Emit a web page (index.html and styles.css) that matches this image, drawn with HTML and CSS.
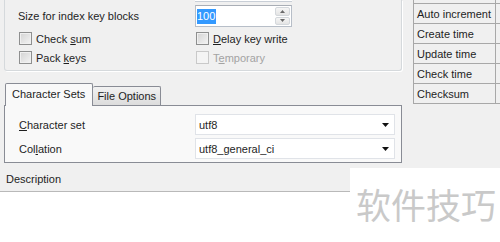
FILE: index.html
```html
<!DOCTYPE html>
<html>
<head>
	<title>Table Options</title>
	<link rel="stylesheet" href="styles.css">
</head>
<body>
	<div class="top">
		<div class="left">
			<div class="group">
				<div class="prev_input"></div>
				<div class="grid">
					<div class="label">Size for index key blocks</div>
					<div class="spin">
						<div class="spin_text"><span class="sel">100</span></div>
						<div class="spin_btns">
							<div class="spin_btn"><svg width="5" height="3" viewBox="0 0 5 3"><path d="M0 3 L2.5 0 L5 3 Z" fill="#6a6a6a"/></svg></div>
							<div class="spin_btn"><svg width="5" height="3" viewBox="0 0 5 3"><path d="M0 0 L2.5 3 L5 0 Z" fill="#6a6a6a"/></svg></div>
						</div>
					</div>
					<div class="check"><span class="box"></span><span>Check <u>s</u>um</span></div>
					<div class="check"><span class="box"></span><span><u>D</u>elay key write</span></div>
					<div class="check"><span class="box"></span><span>Pack <u>k</u>eys</span></div>
					<div class="check disabled"><span class="box"></span><span>T<u>e</u>mporary</span></div>
				</div>
			</div>

			<div class="tabs">
				<div class="tab active">Character Sets</div>
				<div class="tab">File Options</div>
			</div>
			<div class="panel">
				<div class="label"><span><u>C</u>haracter set</span></div>
				<div class="combo"><span>utf8</span><svg width="7" height="4" viewBox="0 0 7 4"><path d="M0 0 L7 0 L3.5 4 Z" fill="#111"/></svg></div>
				<div class="label"><span>Col<u>l</u>ation</span></div>
				<div class="combo"><span>utf8_general_ci</span><svg width="7" height="4" viewBox="0 0 7 4"><path d="M0 0 L7 0 L3.5 4 Z" fill="#111"/></svg></div>
			</div>
		</div>

		<table class="info">
			<tr><td>&nbsp;</td><td></td></tr>
			<tr><td>Auto increment</td><td></td></tr>
			<tr><td>Create time</td><td></td></tr>
			<tr><td>Update time</td><td></td></tr>
			<tr><td>Check time</td><td></td></tr>
			<tr><td>Checksum</td><td></td></tr>
		</table>
	</div>

	<div class="desc_head">Description</div>
	<div class="desc_body"></div>

	<div class="watermark">软件技巧</div>
</body>
</html>
```

FILE: styles.css
```css
html, body{
	margin: 0;
	height: 242px;
	overflow: hidden;
}
body{
	background-color: #f0f0f0;
	font-family: "Liberation Sans", Arial, sans-serif;
	font-size: 11px;
	color: #1e1e1e;
	position: relative;
}
u{
	text-decoration: underline;
	text-underline-offset: 1px;
}

.top{
	display: flex;
	align-items: flex-start;
	gap: 11px;
}
.left{
	width: 398px;
	padding-left: 4px;
	flex: none;
}

/* group box */
.group{
	border: 1px solid #d5d9dc;
	border-top: none;
	border-radius: 0 0 3px 3px;
	padding: 0 0 3px 13px;
	box-shadow: 1px 1px 0 #fff;
}
.prev_input{
	width: 97px;
	height: 1px;
	margin-left: 177px;
	border-bottom: 1px solid #c8ced6;
	background-color: #fff;
}
.grid{
	display: grid;
	grid-template-columns: 177px 1fr;
	margin-top: 3px;
}
.label{
	display: flex;
	align-items: center;
	height: 22px;
}
.spin{
	display: flex;
	width: 97px;
	height: 22px;
	box-sizing: border-box;
	border: 1px solid #b7bec8;
	border-top-color: #a9aeb6;
	background-color: #fff;
	margin-bottom: 2px;
}
.spin_text{
	flex: 1;
	display: flex;
	align-items: center;
	padding-left: 1px;
}
.sel{
	background-color: #3399ff;
	color: #fff;
	padding: 1px 1px 2px 0;
}
.spin_btns{
	width: 15px;
	display: flex;
	flex-direction: column;
	padding: 1px 1px 1px 0;
	gap: 1px;
}
.spin_btn{
	flex: 1;
	display: flex;
	align-items: center;
	justify-content: center;
	border: 1px solid #d4d8dc;
	border-radius: 2px;
	background: linear-gradient(#f6f6f6, #e4e4e4);
}
.check{
	display: flex;
	align-items: center;
	height: 19px;
	margin-left: 1px;
}
.box{
	width: 11px;
	height: 11px;
	border: 1px solid #8e8f8f;
	margin-right: 4px;
	background: linear-gradient(135deg, #d3d3d3, #f4f4f4);
	box-shadow: inset 0 0 0 1px #f0f0f0;
}
.disabled{
	color: #a3a3a3;
}
.disabled .box{
	border-color: #c9c9c9;
	background: #f4f4f4;
	box-shadow: none;
}

/* tabs */
.tabs{
	display: flex;
	align-items: flex-end;
	height: 21px;
	margin-top: 13px;
	padding-left: 1px;
}
.tab{
	height: 18px;
	line-height: 18px;
	padding: 0 4px;
	border: 1px solid #898c95;
	border-bottom: none;
	border-left: none;
	background: linear-gradient(#f2f2f2, #dcdcdc);
	border-radius: 2px 2px 0 0;
}
.tab.active{
	height: 22px;
	line-height: 20px;
	padding: 0 7px 0 6px;
	border-left: 1px solid #898c95;
	background: #f9f9f9;
	margin-bottom: -1px;
	position: relative;
	z-index: 1;
}
.panel{
	display: grid;
	grid-template-columns: 176px 1fr;
	row-gap: 3px;
	border: 1px solid #898c95;
	background-color: #f9f9f9;
	padding: 8px 6px 5px 14px;
	height: 43px;
}
.panel .label{
	height: 21px;
}
.combo{
	display: flex;
	align-items: center;
	justify-content: space-between;
	height: 21px;
	box-sizing: border-box;
	border: 1px solid #e0e3e8;
	background-color: #fff;
	padding: 0 5px 0 3px;
}

/* info table */
.info{
	border-collapse: collapse;
	margin-top: -17px;
	flex: none;
}
.info td{
	border: 1px solid #a8a8a8;
	height: 19px;
	padding: 0 0 0 3px;
	background-color: #f0f0f0;
	width: 78px;
	white-space: nowrap;
}
.info td + td{
	width: 20px;
	padding: 0;
}

/* description */
.desc_head{
	height: 28px;
	line-height: 33px;
	padding-left: 6px;
	border-bottom: 1px solid #b9b9b9;
}
.desc_body{
	height: 60px;
	background-color: #fff;
}

.watermark{
	position: absolute;
	left: 350px;
	top: 168px;
	width: 150px;
	height: 74px;
	background-color: #fff;
	font-family: "Noto Sans CJK SC", sans-serif;
	font-size: 35px;
	line-height: 72px;
	color: #c9c9c9;
	padding-left: 6px;
	box-sizing: border-box;
	white-space: nowrap;
}
```
